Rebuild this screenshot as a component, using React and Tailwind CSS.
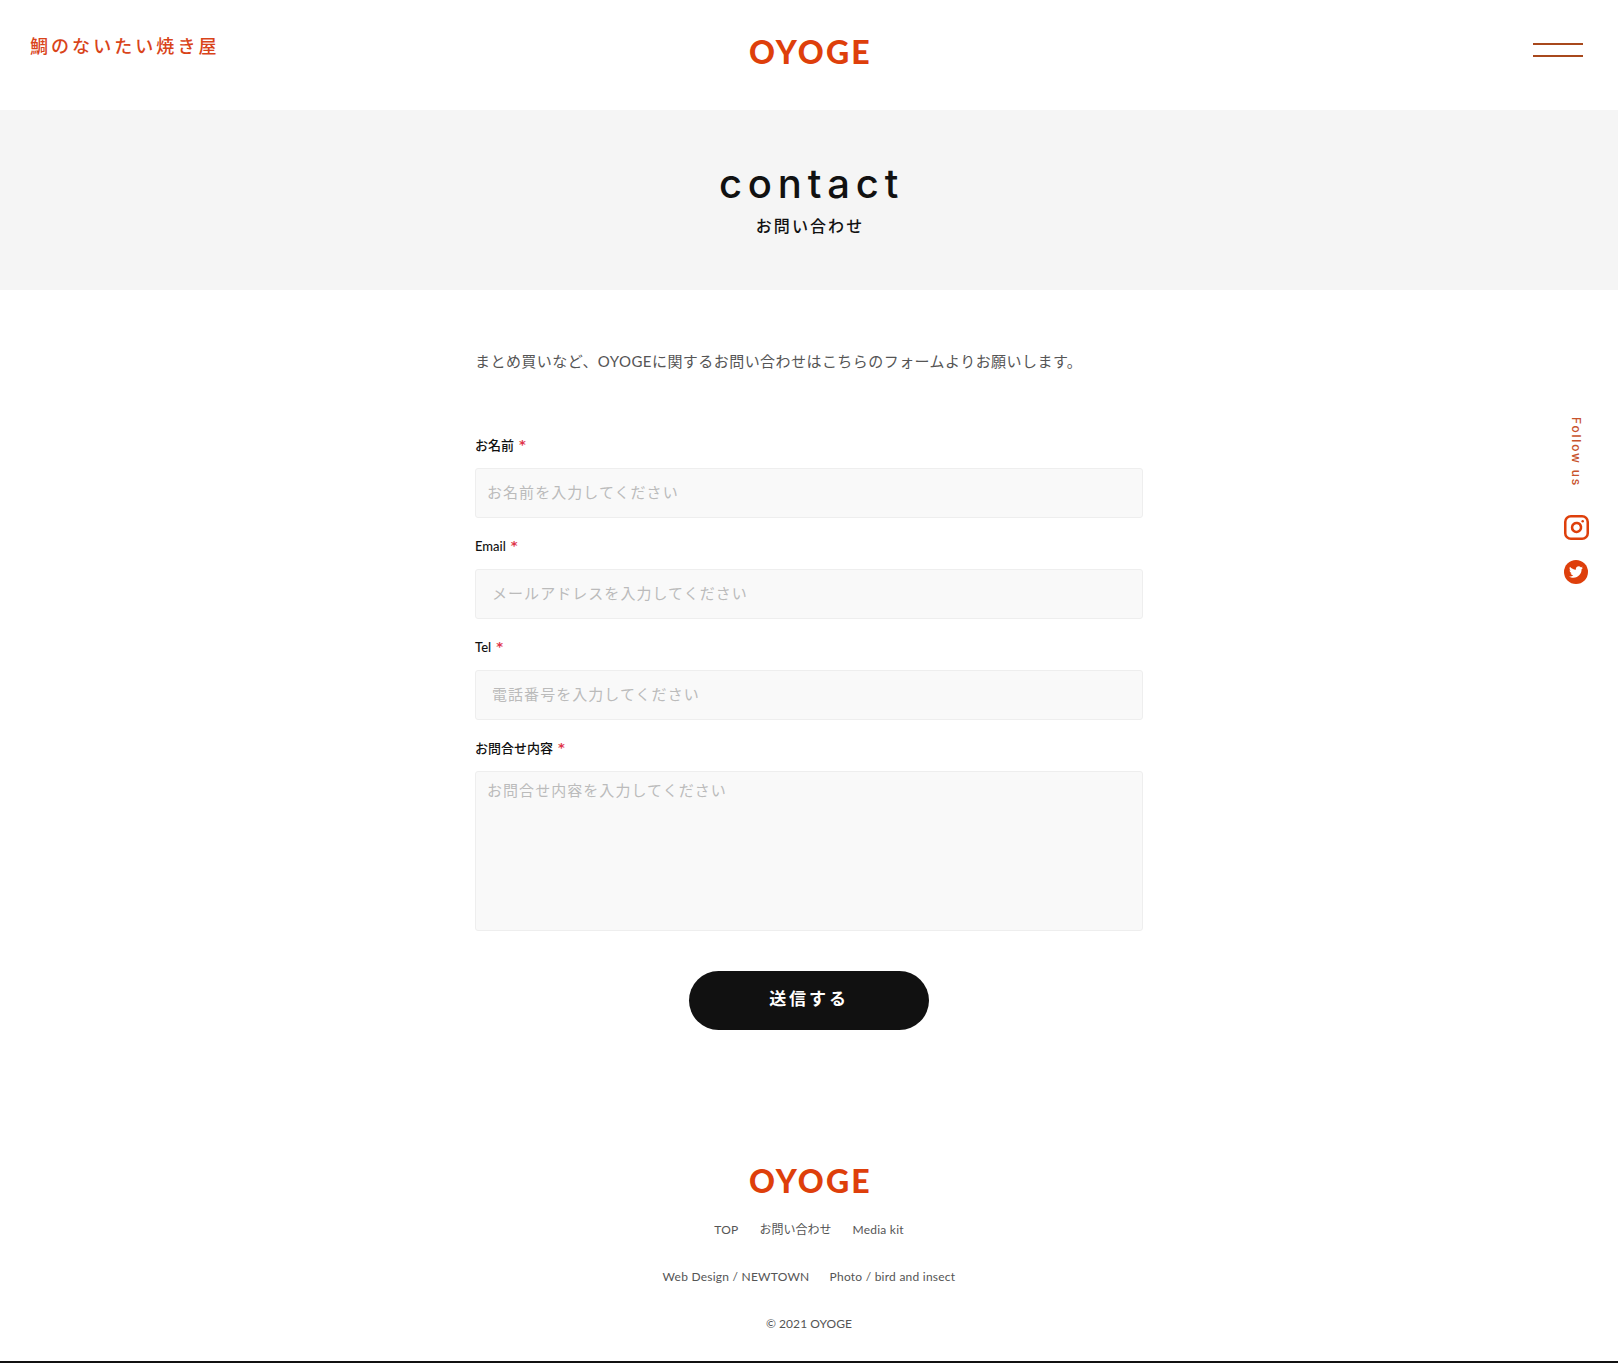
import { useState } from "react";
import { Instagram } from "lucide-react";
import { FaTwitter } from "react-icons/fa";

const bodyFont = "font-['Lato','Noto_Sans_CJK_JP',sans-serif]";

const Logo = () => (
  <div className="ml-[3px] font-['Lato',sans-serif] text-[32px] leading-[36px] font-black tracking-[0.07em] text-[#de3f0b]">
    OYOGE
  </div>
);

const Field = ({ label, placeholder, value, onChange, pad, multiline }) => (
  <div className="flex flex-col">
    <label className="h-[32px] text-[13px] leading-[18px] font-medium text-[#111] flex items-start">
      <span>{label}</span>
      <span className="ml-[5px] font-['DejaVu_Sans',sans-serif] text-[13px] font-bold text-[#e0344a]">*</span>
    </label>
    {multiline ? (
      <textarea
        value={value}
        onChange={onChange}
        placeholder={placeholder}
        className={`${pad} h-[160px] w-full pt-[7px] pb-[8px] text-[15px] leading-[22px] tracking-[0.07em] bg-[#f9f9f9] border border-[#eeeeee] rounded-[3px] resize-none outline-none placeholder:text-[#bbbbbb]`}
      />
    ) : (
      <input
        type="text"
        value={value}
        onChange={onChange}
        placeholder={placeholder}
        className={`${pad} h-[50px] w-full pb-[2px] text-[15px] tracking-[0.07em] bg-[#f9f9f9] border border-[#eeeeee] rounded-[3px] outline-none placeholder:text-[#bbbbbb]`}
      />
    )}
  </div>
);

export default function App() {
  const [formData, setFormData] = useState({ name: "", email: "", tel: "", message: "" });

  return (
    <div className={`${bodyFont} relative bg-white min-h-[1363px] flex flex-col`}>
      <header className="relative h-[110px] flex justify-center pt-[34px]">
        <h1 className="absolute left-[30px] top-[33px] text-[18px] leading-[26px] font-medium tracking-[0.17em] text-[#d9441a]">
          鯛のないたい焼き屋
        </h1>
        <Logo />
        <button className="absolute left-[1533px] top-[43px] w-[50px] h-[14px] flex flex-col justify-between">
          <span className="block h-[2px] bg-[#a8481c]" />
          <span className="block h-[2px] bg-[#a8481c]" />
        </button>
      </header>

      <section className="h-[180px] bg-[#f5f5f5] flex flex-col items-center pt-[50px]">
        <h2 className="ml-[5px] font-['Inter',sans-serif] text-[40px] leading-[48px] font-medium tracking-[0.145em] text-[#111]">
          contact
        </h2>
        <p className="ml-[2px] mt-[6px] text-[16px] leading-[24px] font-medium tracking-[0.13em] text-[#111]">お問い合わせ</p>
      </section>

      <main className="w-[668px] mx-auto">
        <p className="mt-[59px] text-[15px] leading-[24px] tracking-[0.03em] text-[#555]">
          まとめ買いなど、OYOGEに関するお問い合わせはこちらのフォームよりお願いします。
        </p>

        <form className="mt-[63px] flex flex-col gap-[19px]" onSubmit={(e) => e.preventDefault()}>
          <Field
            label="お名前"
            pad="px-[11px]"
            placeholder="お名前を入力してください"
            value={formData.name}
            onChange={(e) => setFormData({ ...formData, name: e.target.value })}
          />
          <Field
            label="Email"
            pad="px-[16px]"
            placeholder="メールアドレスを入力してください"
            value={formData.email}
            onChange={(e) => setFormData({ ...formData, email: e.target.value })}
          />
          <Field
            label="Tel"
            pad="px-[16px]"
            placeholder="電話番号を入力してください"
            value={formData.tel}
            onChange={(e) => setFormData({ ...formData, tel: e.target.value })}
          />
          <Field
            label="お問合せ内容"
            pad="px-[11px]"
            multiline
            placeholder="お問合せ内容を入力してください"
            value={formData.message}
            onChange={(e) => setFormData({ ...formData, message: e.target.value })}
          />
          <button
            type="submit"
            className="self-center mt-[21px] w-[240px] h-[59px] pb-[3px] rounded-full bg-[#111] text-white text-[17px] font-bold tracking-[0.17em]"
          >
            送信する
          </button>
        </form>
      </main>

      <footer className="mt-[133px] flex flex-col items-center text-[12px] leading-[20px] tracking-[0.02em] text-[#555]">
        <Logo />
        <nav className="mt-[21px] flex gap-[21px]">
          <span>TOP</span>
          <span className="tracking-normal">お問い合わせ</span>
          <span>Media kit</span>
        </nav>
        <div className="mt-[27px] flex gap-[20px]">
          <span>Web Design / NEWTOWN</span>
          <span>Photo / bird and insect</span>
        </div>
        <div className="mt-[27px] tracking-[0.005em]">© 2021 OYOGE</div>
      </footer>
      <div className="absolute left-0 right-0 bottom-0 h-[2px] bg-[#111]" />

      <aside className="absolute left-[1564px] top-[417px] w-[24px] flex flex-col items-center text-[#de3f0b]">
        <span className="[writing-mode:vertical-rl] font-['Inter',sans-serif] text-[12px] leading-[16px] font-medium tracking-[0.15em] text-[#c8532c]">
          Follow us
        </span>
        <Instagram size={27} strokeWidth={2.25} className="mt-[27px]" />
        <span className="mt-[19px] w-[24px] h-[24px] rounded-full bg-[#de3f0b] flex items-center justify-center">
          <FaTwitter size={14} className="text-white" />
        </span>
      </aside>
    </div>
  );
}
